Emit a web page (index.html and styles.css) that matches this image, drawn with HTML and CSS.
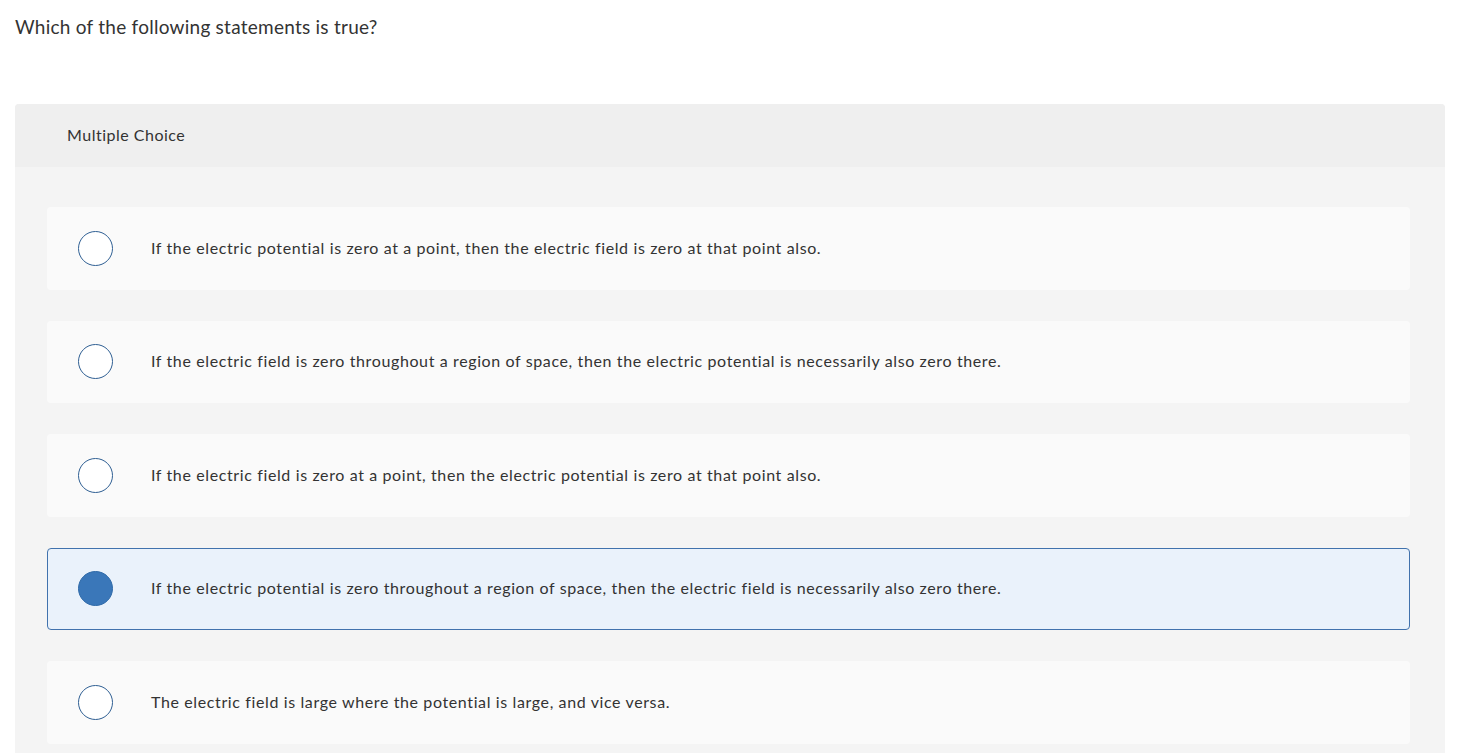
FILE: index.html
```html
<!DOCTYPE html>
<html>
<head>
<meta charset="utf-8">
<link rel="stylesheet" href="styles.css">
</head>
<body>
<p class="question">Which of the following statements is true?</p>
<div class="panel">
  <div class="panel-header">Multiple Choice</div>
  <div class="panel-body">
    <div class="option"><span class="radio"></span><span class="label">If the electric potential is zero at a point, then the electric field is zero at that point also.</span></div>
    <div class="option"><span class="radio"></span><span class="label">If the electric field is zero throughout a region of space, then the electric potential is necessarily also zero there.</span></div>
    <div class="option"><span class="radio"></span><span class="label">If the electric field is zero at a point, then the electric potential is zero at that point also.</span></div>
    <div class="option selected"><span class="radio"></span><span class="label">If the electric potential is zero throughout a region of space, then the electric field is necessarily also zero there.</span></div>
    <div class="option"><span class="radio"></span><span class="label">The electric field is large where the potential is large, and vice versa.</span></div>
  </div>
</div>
</body>
</html>
```
FILE: styles.css
```css
* { box-sizing: border-box; }
html, body { margin: 0; padding: 0; background: #fff; }
body {
  font-family: Lato, "Open Sans", sans-serif;
  color: #333;
  padding: 0 34px 0 15px;
  font-variant-ligatures: none;
}
.question {
  margin: 0;
  padding-top: 15px;
  height: 104px;
  font-size: 19px;
  line-height: 24px;
  letter-spacing: 0.25px;
}
.panel {
  border-radius: 4px 4px 0 0;
  overflow: hidden;
  background: #f4f4f4;
}
.panel-header {
  height: 63px;
  background: #efefef;
  padding-left: 52px;
  padding-bottom: 2px;
  display: flex;
  align-items: center;
  font-size: 16px;
  letter-spacing: 0.5px;
}
.panel-body {
  padding: 40px 35px 40px 32px;
  display: flex;
  flex-direction: column;
  gap: 31px;
}
.option {
  height: 82.5px;
  background: #fafafa;
  border-radius: 4px;
  border: 1px solid transparent;
  display: flex;
  align-items: center;
  padding-left: 30px;
  font-size: 16px;
  letter-spacing: 0.62px;
}
.label {
  padding-bottom: 2px;
}
.radio {
  width: 35px;
  height: 35px;
  border-radius: 50%;
  border: 1.5px solid #2f5f93;
  background: #fff;
  flex: none;
  margin-right: 38px;
}
.option.selected {
  background: #eaf2fb;
  border-color: #4172ad;
}
.option.selected .radio {
  background: #3a77b9;
  border-color: #2f6aa8;
}
```
